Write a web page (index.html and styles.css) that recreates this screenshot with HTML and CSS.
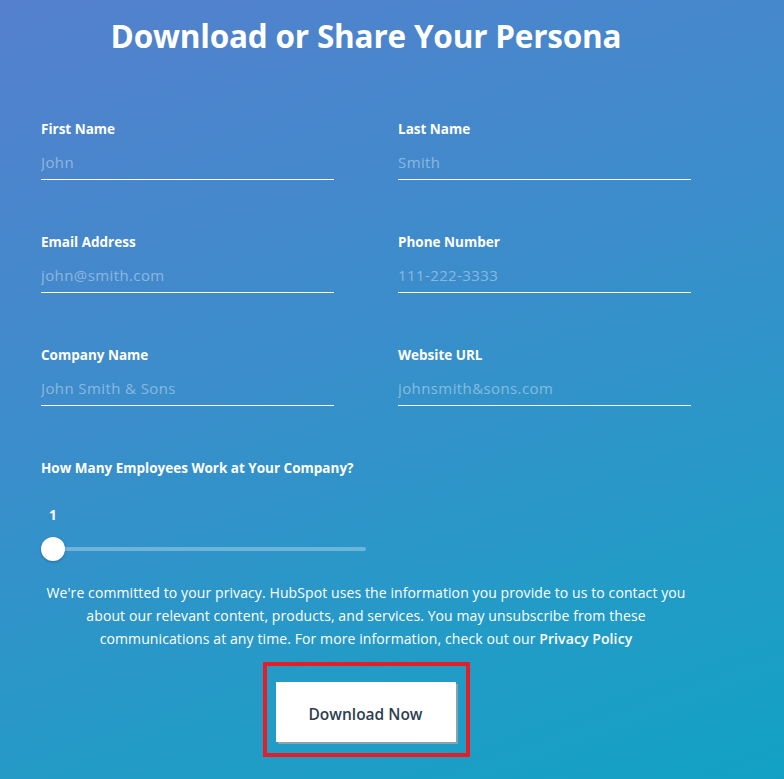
FILE: index.html
```html
<!DOCTYPE html>
<html lang="en">
<head>
<meta charset="utf-8">
<title>Download or Share Your Persona</title>
<link rel="stylesheet" href="styles.css">
</head>
<body>
<main class="page">
  <h1 class="title">Download or Share Your Persona</h1>
  <form class="form">
    <div class="grid">
      <div class="field">
        <label class="label">First Name</label>
        <input class="input" type="text" placeholder="John">
      </div>
      <div class="field">
        <label class="label">Last Name</label>
        <input class="input" type="text" placeholder="Smith">
      </div>
      <div class="field">
        <label class="label">Email Address</label>
        <input class="input" type="text" placeholder="john@smith.com">
      </div>
      <div class="field">
        <label class="label">Phone Number</label>
        <input class="input" type="text" placeholder="111-222-3333">
      </div>
      <div class="field">
        <label class="label">Company Name</label>
        <input class="input" type="text" placeholder="John Smith &amp; Sons">
      </div>
      <div class="field">
        <label class="label">Website URL</label>
        <input class="input" type="text" placeholder="johnsmith&amp;sons.com">
      </div>
    </div>
    <div class="question">
      <div class="label">How Many Employees Work at Your Company?</div>
      <div class="value">1</div>
      <div class="slider">
        <div class="track"></div>
        <div class="thumb"></div>
      </div>
    </div>
    <p class="privacy">We're committed to your privacy. HubSpot uses the information you provide to us to contact you<br>about our relevant content, products, and services. You may unsubscribe from these<br>communications at any time. For more information, check out our <b>Privacy Policy</b></p>
    <div class="actions">
      <div class="highlight">
        <button class="button" type="button">Download Now</button>
      </div>
    </div>
  </form>
</main>
</body>
</html>
```
FILE: styles.css
```css
html, body {
  margin: 0;
  padding: 0;
}
body {
  width: 784px;
  height: 779px;
  overflow: hidden;
  background: linear-gradient(160deg, #5580cd 0%, #3d8ccb 40%, #239bc7 75%, #12a1c5 100%);
  font-family: "Open Sans", Lato, sans-serif;
  color: #fff;
}
.page {
  width: 650px;
  padding: 16px 0 0 41px;
}
.title {
  margin: 0;
  text-align: center;
  font-size: 31.5px;
  line-height: 40px;
  font-weight: 700;
  letter-spacing: -0.2px;
}
.grid {
  margin-top: 64px;
  display: grid;
  grid-template-columns: 293px 293px;
  column-gap: 64px;
  row-gap: 53px;
}
.field {
  display: flex;
  flex-direction: column;
}
.label {
  font-size: 13.5px;
  line-height: 18px;
  font-weight: 700;
  color: #fff;
}
.input {
  margin-top: 6px;
  height: 36px;
  box-sizing: border-box;
  border: 0;
  border-bottom: 1px solid #fff;
  background: transparent;
  padding: 0;
  font-family: "Open Sans", Lato, sans-serif;
  font-size: 15px;
  letter-spacing: 0.4px;
  color: #fff;
  outline: none;
}
.input::placeholder {
  color: rgba(255, 255, 255, 0.4);
}
.question {
  margin-top: 53px;
}
.value {
  margin-top: 29px;
  padding-left: 8px;
  font-size: 13.5px;
  line-height: 18px;
  font-weight: 700;
}
.slider {
  position: relative;
  margin-top: 13px;
  width: 325px;
  height: 24px;
}
.track {
  position: absolute;
  left: 12px;
  right: 0;
  top: 10px;
  height: 4px;
  border-radius: 2px;
  background: rgba(255, 255, 255, 0.3);
}
.thumb {
  position: absolute;
  left: 0;
  top: 0;
  width: 24px;
  height: 24px;
  border-radius: 50%;
  background: #fff;
  box-shadow: 0 1px 3px rgba(0, 0, 0, 0.25);
}
.privacy {
  margin: 20px -40px 0;
  text-align: center;
  font-size: 14px;
  line-height: 23px;
  letter-spacing: 0.1px;
  color: #fff;
}
.privacy b {
  font-weight: 600;
}
.actions {
  display: flex;
  justify-content: center;
  margin-top: 12px;
}
.highlight {
  border: 4px solid #e41e26;
  padding: 16px 10px 11px 9px;
}
.button {
  display: block;
  width: 180px;
  height: 60px;
  border: 0;
  padding: 3px 0 0;
  background: #fff;
  box-shadow: 2px 2px 0 #8aa3ae;
  font-family: "Open Sans", Lato, sans-serif;
  font-size: 15.5px;
  font-weight: 600;
  color: #2d3e50;
  cursor: pointer;
}
```
